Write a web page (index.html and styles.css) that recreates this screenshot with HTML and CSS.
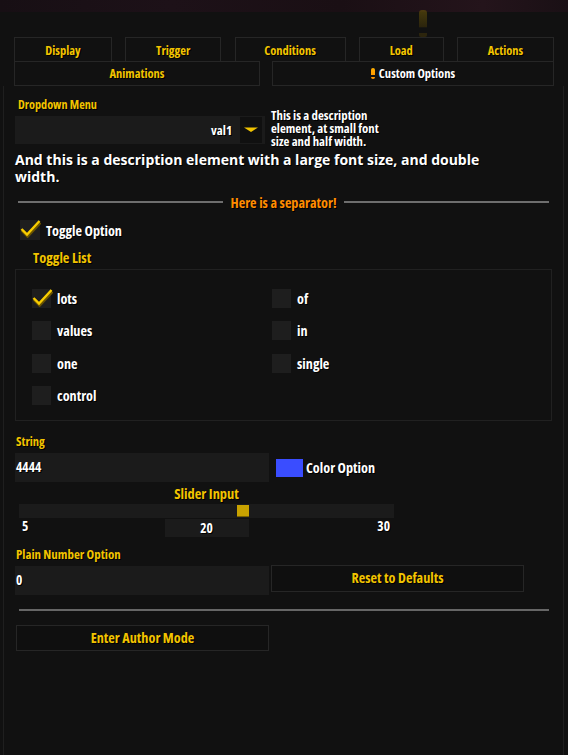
FILE: index.html
```html
<!DOCTYPE html>
<html>
<head>
<meta charset="utf-8">
<link rel="stylesheet" href="styles.css">
</head>
<body>
<div class="topstrip"></div>
<div class="ghost-mark"></div>
<div class="tabs">
  <div class="tabrow1">
    <div class="tab">Display</div>
    <div class="tab">Trigger</div>
    <div class="tab">Conditions</div>
    <div class="tab">Load</div>
    <div class="tab">Actions</div>
  </div>
  <div class="tabrow2">
    <div class="tab2">Animations</div>
    <div class="tab2 active"><span class="excl"></span>Custom Options</div>
  </div>
</div>
<div class="panel">
  <div class="label lbl-dropdown">Dropdown Menu</div>
  <div class="dd-row">
    <div class="dropdown">
      <span class="dd-val">val1</span>
      <span class="dd-btn"><svg width="14" height="6" viewBox="0 0 14 6"><path d="M0 0.5 H14 L7 5 Z" fill="#f2c400"/></svg></span>
    </div>
    <div class="desc-small">This is a description<br>element, at small font<br>size and half width.</div>
  </div>
  <div class="desc-large">And this is a description element with a large font size, and double width.</div>
  <div class="separator">
    <span class="sep-line"></span>
    <span class="sep-text">Here is a separator!</span>
    <span class="sep-line"></span>
  </div>
  <div class="toggle-opt">
    <span class="cb"><svg class="chk" width="21" height="18" viewBox="0 0 21 18"><path d="M1.5 9 L7 14.5 L19.5 1" fill="none" stroke="#6a5400" stroke-width="3.4" transform="translate(0.6 1.4)"/><path d="M1.5 9 L7 14.5 L19.5 1" fill="none" stroke="#f8cc00" stroke-width="2.4"/></svg></span>
    <span class="tlabel">Toggle Option</span>
  </div>
  <div class="label big lbl-toggle">Toggle List</div>
  <div class="tlist">
    <div class="tcol">
      <div class="titem"><span class="cb small"><svg class="chk" width="21" height="18" viewBox="0 0 21 18"><path d="M1.5 9 L7 14.5 L19.5 1" fill="none" stroke="#6a5400" stroke-width="3.4" transform="translate(0.6 1.4)"/><path d="M1.5 9 L7 14.5 L19.5 1" fill="none" stroke="#f8cc00" stroke-width="2.4"/></svg></span><span class="tlabel">lots</span></div>
      <div class="titem"><span class="cb small"></span><span class="tlabel">values</span></div>
      <div class="titem"><span class="cb small"></span><span class="tlabel">one</span></div>
      <div class="titem"><span class="cb small"></span><span class="tlabel">control</span></div>
    </div>
    <div class="tcol">
      <div class="titem"><span class="cb small"></span><span class="tlabel">of</span></div>
      <div class="titem"><span class="cb small"></span><span class="tlabel">in</span></div>
      <div class="titem"><span class="cb small"></span><span class="tlabel">single</span></div>
    </div>
  </div>
  <div class="label lbl-string">String</div>
  <div class="string-row">
    <div class="input">4444</div>
    <span class="swatch"></span>
    <span class="tlabel">Color Option</span>
  </div>
  <div class="slider">
    <div class="label big slider-label">Slider Input</div>
    <div class="track"><span class="thumb" style="left: calc((100% - 12px) * 0.6);"></span></div>
    <div class="slider-vals">
      <span class="sv-min">5</span>
      <span class="sv-box">20</span>
      <span class="sv-max">30</span>
    </div>
  </div>
  <div class="label lbl-number">Plain Number Option</div>
  <div class="number-row">
    <div class="input">0</div>
    <div class="button reset">Reset to Defaults</div>
  </div>
  <div class="hr"></div>
  <div class="button author">Enter Author Mode</div>
</div>
</body>
</html>
```

FILE: styles.css
```css
* { box-sizing: border-box; }
html, body { margin: 0; padding: 0; }
body {
  width: 568px;
  height: 755px;
  overflow: hidden;
  background: #111111;
  font-family: "Open Sans", "Noto Sans", sans-serif;
  font-stretch: 80%;
  font-weight: 700;
  color: #ffffff;
  text-shadow: 1px 1px 0 #000;
  position: relative;
}
.topstrip {
  height: 12px;
  background: linear-gradient(90deg, #170f14 0%, #1d1118 30%, #1a0f14 60%, #24141b 85%, #1a1015 100%);
}
.ghost-mark {
  position: absolute;
  left: 419px;
  top: 10px;
  width: 8px;
  height: 27px;
  background: linear-gradient(180deg, #6a5608 0%, #3e320a 62%, transparent 66%, transparent 86%, #3e320a 87%);
  border-radius: 3px 3px 2px 2px;
  opacity: 0.6;
}
.tabs {
  margin: 25px 14px 0 14px;
  width: 540px;
}
.tabrow1 {
  display: flex;
  justify-content: space-between;
  height: 24px;
}
.tab {
  border: 1px solid #262626;
  border-bottom: none;
  color: #f2c400;
  font-size: 12.5px;
  line-height: 25px;
  text-align: center;
}
.tab:nth-child(1) { width: 98px; }
.tab:nth-child(2) { width: 96px; }
.tab:nth-child(3) { width: 111px; }
.tab:nth-child(4) { width: 85px; }
.tab:nth-child(5) { width: 97px; }
.tabrow2 {
  display: flex;
  justify-content: space-between;
  height: 25px;
}
.tab2 {
  border: 1px solid #262626;
  color: #f2c400;
  font-size: 12.5px;
  line-height: 23px;
  text-align: center;
  width: 246px;
}
.tab2.active {
  width: 282px;
  color: #ffffff;
  display: flex;
  align-items: center;
  justify-content: center;
}
.excl {
  display: inline-block;
  width: 4px;
  height: 11px;
  margin-right: 4px;
  background: linear-gradient(180deg, #ffb000 0%, #ff9800 65%, transparent 66%, transparent 78%, #ff9800 79%);
  border-radius: 2px;
}
.panel {
  margin: 0 4px 0 3px;
  border-left: 1px solid #1f1f1f;
  border-right: 1px solid #1f1f1f;
  height: 669px;
  padding: 0 0 0 11px;
}
.label {
  color: #f2c400;
  font-size: 12.2px;
  line-height: 14px;
}
.label.big {
  font-size: 14.4px;
  line-height: 16px;
}
.lbl-dropdown { padding: 12px 0 0 3px; }
.dd-row {
  display: flex;
  align-items: flex-start;
  margin-top: 4px;
}
.dropdown {
  width: 250px;
  height: 28px;
  background: #1b1b1b;
  display: flex;
  align-items: center;
  justify-content: flex-end;
  padding-right: 3px;
  flex: none;
}
.dd-val { font-size: 13px; margin-right: 8px; }
.dd-btn {
  width: 22px;
  height: 26px;
  background: #101010;
  display: flex;
  align-items: center;
  justify-content: center;
}
.desc-small {
  font-size: 12.8px;
  line-height: 13px;
  margin: -7.5px 0 0 6px;
}
.desc-large {
  font-size: 14px;
  font-stretch: 100%;
  line-height: 17px;
  margin: 3px 0 0 0;
  width: 505px;
}
.separator {
  display: flex;
  align-items: center;
  margin: 9.5px 0 0 3px;
  width: 531px;
  height: 16px;
}
.sep-line {
  flex: 1;
  height: 2px;
  background: #6e6e6e;
}
.sep-text {
  color: #ff8c00;
  font-size: 14.2px;
  padding: 0 7px;
}
.toggle-opt {
  display: flex;
  align-items: center;
  margin: 10px 0 0 5px;
}
.cb {
  width: 20px;
  height: 20px;
  background: #1e1e1e;
  position: relative;
  flex: none;
}
.cb.small { width: 19px; height: 19px; }
.chk {
  position: absolute;
  left: 0;
  top: 0;
}
.tlabel {
  font-size: 14.2px;
  margin-left: 6px;
}
.lbl-toggle { padding: 10px 0 0 18px; }
.tlist {
  margin-top: 3px;
  width: 537px;
  height: 152px;
  border: 1px solid #212121;
  display: flex;
  padding: 19px 0 0 16px;
}
.tcol {
  width: 240px;
  display: flex;
  flex-direction: column;
  gap: 13.3px;
}
.titem {
  display: flex;
  align-items: center;
  height: 19px;
}
.lbl-string { padding: 14px 0 0 1px; font-size: 12.5px; }
.string-row {
  display: flex;
  align-items: center;
  margin-top: 4px;
}
.input {
  width: 254px;
  height: 29px;
  background: #1b1b1b;
  font-size: 13.5px;
  line-height: 29px;
  padding-left: 1px;
  flex: none;
}
.swatch {
  width: 27px;
  height: 18px;
  background: #3a4dff;
  margin-left: 7px;
}
.string-row .tlabel { margin-left: 3px; }
.slider {
  width: 375px;
  margin: 4px 0 0 4px;
}
.slider-label { text-align: center; }
.track {
  margin-top: 2px;
  height: 14px;
  background: #1b1b1b;
  position: relative;
}
.thumb {
  position: absolute;
  top: 1px;
  width: 12px;
  height: 12px;
  background: #c8a200;
  border-bottom: 1px solid #7a6300;
}
.slider-vals {
  display: grid;
  grid-template-columns: 1fr 84px 1fr;
  margin-top: 1px;
  font-size: 13.5px;
  height: 18px;
}
.sv-min { padding-left: 3px; line-height: 15px; }
.sv-max { padding-right: 4px; line-height: 15px; text-align: right; }
.sv-box {
  height: 18px;
  background: #1b1b1b;
  text-align: center;
  line-height: 18px;
}
.lbl-number { padding: 10px 0 0 1px; font-size: 12.9px; }
.number-row {
  display: flex;
  align-items: flex-start;
  margin-top: 5px;
}
.button {
  border: 1px solid #262626;
  background: #0f0f0f;
  color: #f2c400;
  font-size: 14.2px;
  text-align: center;
}
.reset {
  width: 253px;
  height: 27px;
  line-height: 24px;
  margin: -1px 0 0 2px;
}
.hr {
  margin: 14px 0 0 4px;
  width: 530px;
  height: 2px;
  background: #666;
}
.author {
  width: 253px;
  height: 26px;
  line-height: 23px;
  margin: 14px 0 0 1px;
}
```
